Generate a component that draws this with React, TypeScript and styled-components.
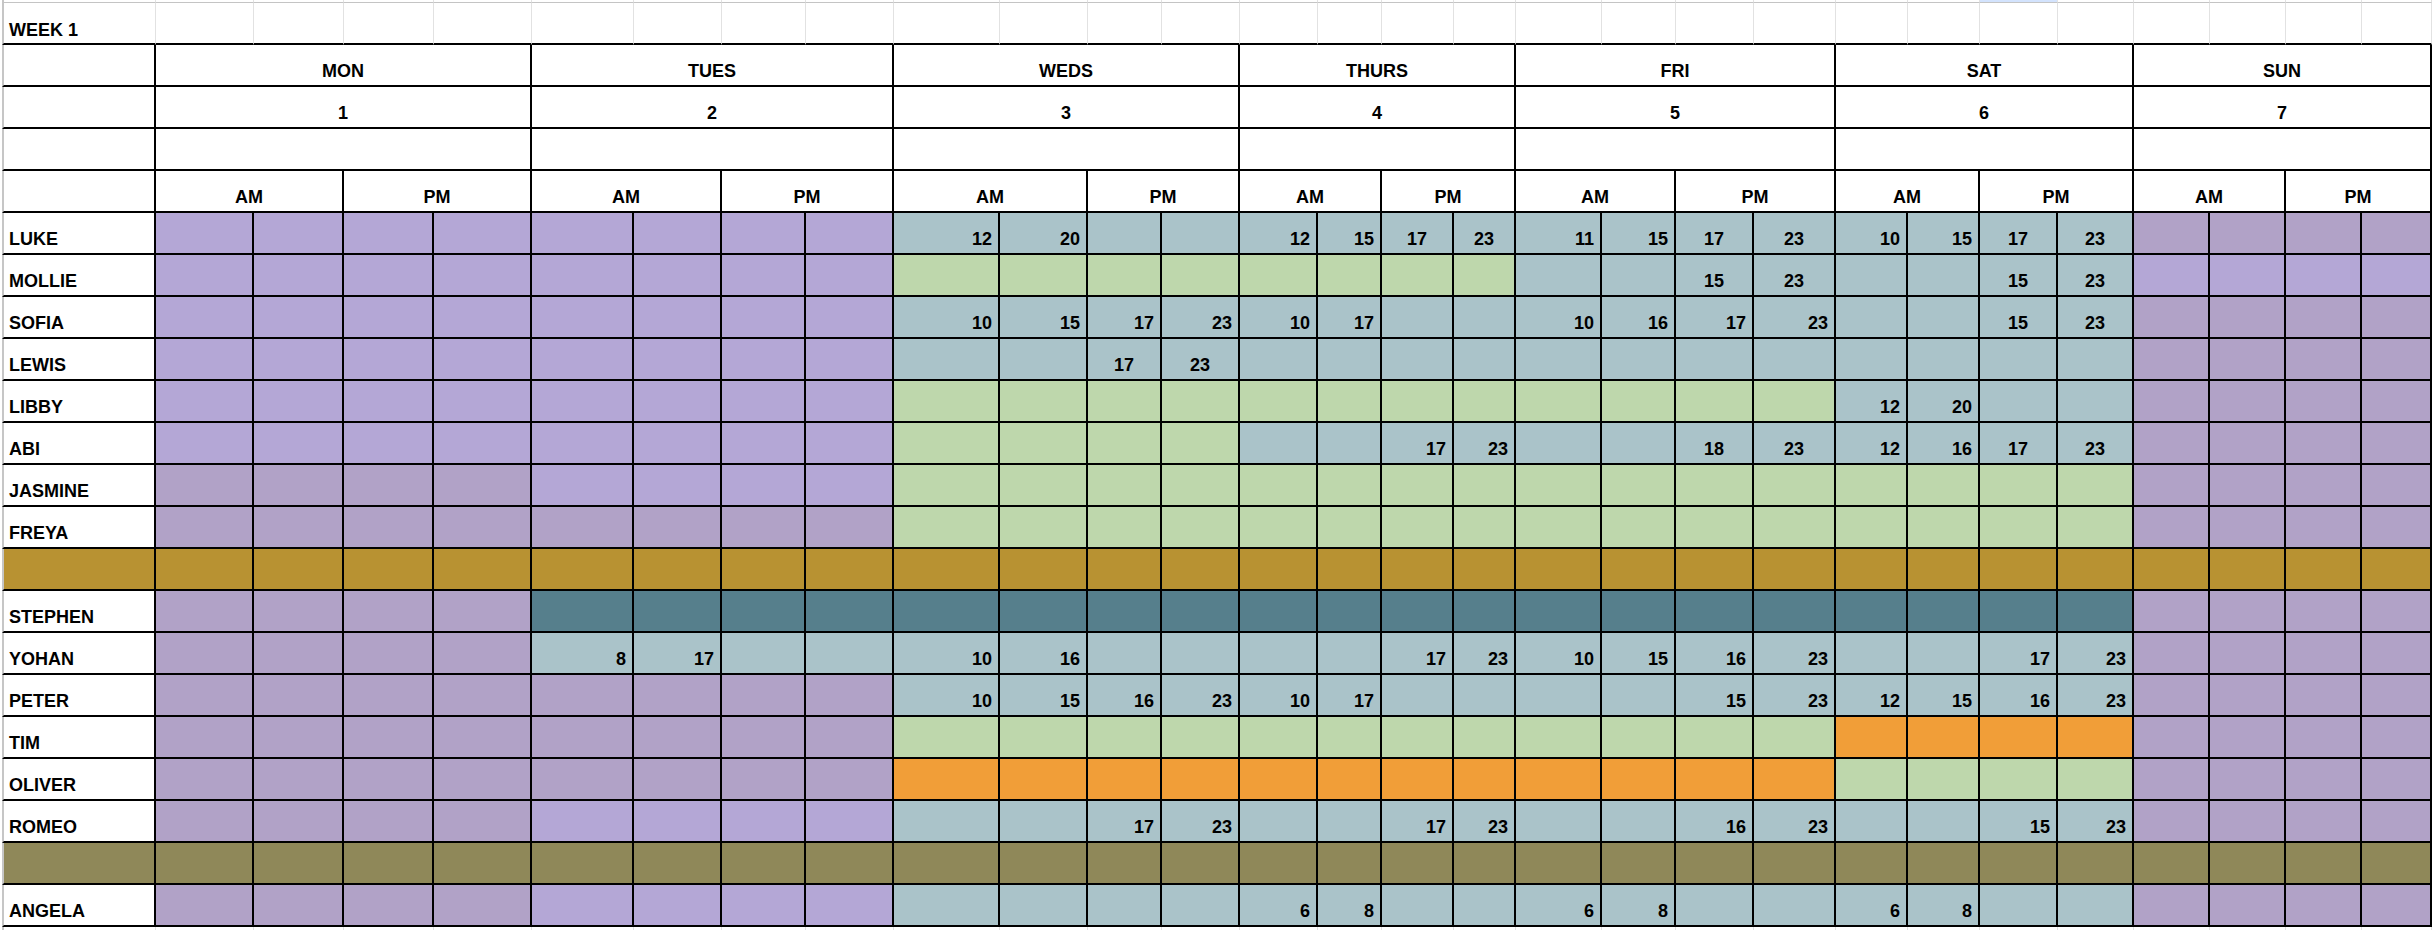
import styled, { createGlobalStyle } from "styled-components";

const GlobalStyle = createGlobalStyle`
  html, body {
    margin: 0;
    padding: 0;
    background: #ffffff;
  }
  body {
    width: 2432px;
    height: 930px;
    overflow: hidden;
  }
`;

// widths of the name column and the 28 half-shift columns (border centre to border centre)
const COLS = [
  154, 98, 90, 90, 98, 102, 88, 84, 88, 106, 88, 74, 78, 78, 64, 72, 62, 86, 74, 78, 82, 72, 72, 78, 76, 76, 76, 76, 70,
];

const FILL: Record<string, string> = {
  P: "#b4a7d6",
  Q: "#b1a2c7",
  B: "#aac3c9",
  G: "#bed7ac",
  O: "#f19e38",
  T: "#567f8c",
  W: "#ffffff",
};

const GOLD = "#b89232";
const OLIVE = "#8f8859";

const DAYS = ["MON", "TUES", "WEDS", "THURS", "FRI", "SAT", "SUN"];

const Sheet = styled.div`
  display: grid;
  grid-template-columns: ${COLS.map((w) => `${w}px`).join(" ")};
  grid-template-rows: 3px repeat(22, 42px) 3px;
  padding-left: 2px;
  font-family: "Liberation Sans", Arial, sans-serif;
  font-weight: bold;
  font-size: 18px;
  line-height: 20px;
  color: #000;
`;

const Cell = styled.div<{ $bg?: string; $align?: string; $span?: number }>`
  box-sizing: border-box;
  display: flex;
  align-items: flex-end;
  justify-content: ${(p) => p.$align || "center"};
  grid-column: span ${(p) => p.$span || 1};
  padding: 0 6px 4px 6px;
  background: ${(p) => p.$bg || "#ffffff"};
  border-right: 2px solid #000;
  border-bottom: 2px solid #000;
  white-space: nowrap;
  overflow: hidden;
`;

const NameCell = styled(Cell)`
  justify-content: flex-start;
  padding-left: 5px;
  border-left: 2px solid #c6c6c6;
`;

const GridCell = styled.div<{ $first?: boolean; $bg?: string }>`
  box-sizing: border-box;
  display: flex;
  align-items: flex-end;
  padding: 0 0 3px 5px;
  background: ${(p) => p.$bg || "#ffffff"};
  border-right: 1px solid #e2e2e2;
  border-left: ${(p) => (p.$first ? "2px solid #c6c6c6" : "none")};
`;

const TopStripCell = styled(GridCell)`
  padding: 0;
  border-bottom: 1px solid #c4c4c4;
`;

const WeekCell = styled(GridCell)`
  border-bottom: 2px solid #000;
`;

type Staff = { name: string; days: string; values?: string };

const blank = "- - - -";
const v = (...d: string[]) => d.join(" ");

const TOP: Staff[] = [
  {
    name: "LUKE",
    days: "PPBBBBQ",
    values: v(blank, blank, "12r 20r - -", "12r 15r 17c 23c", "11r 15r 17c 23c", "10r 15r 17c 23c", blank),
  },
  {
    name: "MOLLIE",
    days: "PPGGBBP",
    values: v(blank, blank, blank, blank, "- - 15c 23c", "- - 15c 23c", blank),
  },
  {
    name: "SOFIA",
    days: "PPBBBBQ",
    values: v(blank, blank, "10r 15r 17r 23r", "10r 17r - -", "10r 16r 17r 23r", "- - 15c 23c", blank),
  },
  { name: "LEWIS", days: "PPBBBBQ", values: v(blank, blank, "- - 17c 23c", blank, blank, blank, blank) },
  { name: "LIBBY", days: "PPGGGBQ", values: v(blank, blank, blank, blank, blank, "12r 20r - -", blank) },
  {
    name: "ABI",
    days: "PPGBBBQ",
    values: v(blank, blank, blank, "- - 17r 23r", "- - 18c 23c", "12r 16r 17c 23c", blank),
  },
  { name: "JASMINE", days: "QPGGGGQ" },
  { name: "FREYA", days: "QQGGGGQ" },
];

const MIDDLE: Staff[] = [
  { name: "STEPHEN", days: "QTTTTTQ" },
  {
    name: "YOHAN",
    days: "QBBBBBQ",
    values: v(blank, "8r 17r - -", "10r 16r - -", "- - 17r 23r", "10r 15r 16r 23r", "- - 17r 23r", blank),
  },
  {
    name: "PETER",
    days: "QQBBBBQ",
    values: v(blank, blank, "10r 15r 16r 23r", "10r 17r - -", "- - 15r 23r", "12r 15r 16r 23r", blank),
  },
  { name: "TIM", days: "QQGGGOQ" },
  { name: "OLIVER", days: "QQOOOGQ" },
  {
    name: "ROMEO",
    days: "QPBBBBQ",
    values: v(blank, blank, "- - 17r 23r", "- - 17r 23r", "- - 16r 23r", "- - 15r 23r", blank),
  },
];

const BOTTOM: Staff[] = [
  {
    name: "ANGELA",
    days: "QPBBBBQ",
    values: v(blank, blank, blank, "6r 8r - -", "6r 8r - -", "6r 8r - -", blank),
  },
];

const StaffRow = ({ staff }: { staff: Staff }) => {
  const tokens = (staff.values || v(blank, blank, blank, blank, blank, blank, blank)).split(" ");
  return (
    <>
      <NameCell>{staff.name}</NameCell>
      {tokens.map((t, i) => {
        const bg = FILL[staff.days[Math.floor(i / 4)]];
        const text = t === "-" ? "" : t.slice(0, -1);
        const align = t.endsWith("c") ? "center" : "flex-end";
        return (
          <Cell key={i} $bg={bg} $align={align}>
            {text}
          </Cell>
        );
      })}
    </>
  );
};

const BandRow = ({ color }: { color: string }) => (
  <>
    <NameCell $bg={color} />
    {Array.from({ length: 28 }, (_, i) => (
      <Cell key={i} $bg={color} />
    ))}
  </>
);

const HeaderRow = ({ labels, span }: { labels: string[]; span: number }) => (
  <>
    <NameCell />
    {labels.map((l, i) => (
      <Cell key={i} $span={span}>
        {l}
      </Cell>
    ))}
  </>
);

const App = () => {
  const sub = Array.from({ length: 28 }, (_, i) => i);
  return (
    <>
      <GlobalStyle />
      <Sheet>
        <TopStripCell $first />
        {sub.map((i) => (
          <TopStripCell key={i} $bg={i === 22 ? "#d3e3fd" : undefined} />
        ))}

        <WeekCell $first>WEEK 1</WeekCell>
        {sub.map((i) => (
          <WeekCell key={i} />
        ))}

        <HeaderRow labels={DAYS} span={4} />
        <HeaderRow labels={DAYS.map((_, i) => String(i + 1))} span={4} />
        <HeaderRow labels={DAYS.map(() => "")} span={4} />
        <HeaderRow labels={DAYS.flatMap(() => ["AM", "PM"])} span={2} />

        {TOP.map((s) => (
          <StaffRow key={s.name} staff={s} />
        ))}
        <BandRow color={GOLD} />
        {MIDDLE.map((s) => (
          <StaffRow key={s.name} staff={s} />
        ))}
        <BandRow color={OLIVE} />
        {BOTTOM.map((s) => (
          <StaffRow key={s.name} staff={s} />
        ))}

        <GridCell $first />
        {sub.map((i) => (
          <GridCell key={i} />
        ))}
      </Sheet>
    </>
  );
};

export default App;
